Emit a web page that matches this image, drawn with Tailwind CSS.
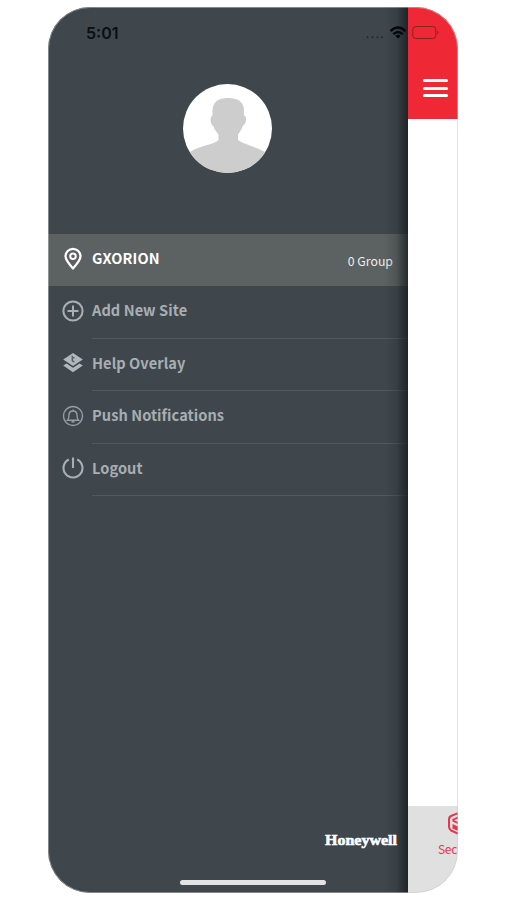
<!DOCTYPE html>
<html lang="en">
<head>
    <meta charset="UTF-8">
    <meta name="viewport" content="width=device-width, initial-scale=1.0">
    <title>Site Menu</title>
    <script src="https://cdn.jsdelivr.net/npm/@tailwindcss/browser@4"></script>
</head>
<body class="bg-white font-['Noto_Sans_CJK_SC',sans-serif] overflow-hidden">
    <div class="relative ml-12 mt-[7px] w-[410px] h-[886px] rounded-[42px] overflow-hidden flex bg-white">
        <!-- Drawer -->
        <aside class="relative w-[360px] h-full shrink-0 bg-[#3f474c] flex flex-col">
            <div class="h-[227px] shrink-0 flex justify-center pt-[77px]">
                <svg class="w-[89px] h-[89px] ml-[-1px]" viewBox="0 0 89 89">
                    <defs>
                        <clipPath id="avatar"><circle cx="44.5" cy="44.5" r="44.5"/></clipPath>
                    </defs>
                    <g clip-path="url(#avatar)">
                        <rect width="89" height="89" fill="#fff"/>
                        <path fill="#cdcdcd" d="M45 14C54 14 61 17.500 61 26V31.500C63.500 32 63.500 37 62 39.500C61 41 60 41.500 59.500 42.500C58.500 46 56 49 55 50.500V56C60 60 71 62 82 68V89H7V68C17 61 31 61 35.500 56V50.500C34 48 31.500 46 30.500 42.500C29 41.500 28.500 41 28 38.500C27 35 28 32 29.500 31.500V26C30 17.500 36 14 45 14Z"/>
                    </g>
                </svg>
            </div>

            <div class="h-[52px] shrink-0 bg-[#5c6161] flex items-center pl-[14px] pr-[15px] text-white">
                <svg class="w-[22px] h-[24px] mr-2 mt-[-2px]" viewBox="0 0 22 24" fill="none" stroke="#fff">
                    <path stroke-width="2.300" stroke-linejoin="round" d="M11 21.500C7 17 3.500 13 3.500 9.300a7.500 7.500 0 0 1 15 0C18.500 13 15 17 11 21.500Z"/>
                    <circle cx="11" cy="9.300" r="2.800" stroke-width="2"/>
                </svg>
                <span class="text-[14.5px] leading-6 font-bold tracking-[0.1px] relative -top-[2px]">GXORION</span>
                <span class="ml-auto text-[12.3px] leading-5 text-[#eeefef] relative top-[1px]">0 Group</span>
            </div>

            <nav class="text-[14.6px] leading-6 font-bold tracking-[0.05px] text-[#a8aeb2]">
                <div class="h-[52.500px] flex items-center pl-[14px]">
                    <svg class="w-[22px] h-[22px] mr-2 mt-[-3px] shrink-0" viewBox="0 0 22 22" fill="none" stroke="#a8b0b5" stroke-width="2">
                        <circle cx="11" cy="11" r="9.600"/>
                        <path d="M11 5.500V16.500M5.500 11H16.500"/>
                    </svg>
                    <div class="h-full grow border-b border-[#525b5c] pt-[12px]">Add New Site</div>
                </div>
                <div class="h-[52.500px] flex items-center pl-[14px]">
                    <svg class="w-[22px] h-[22px] mr-2 mt-[-3px] shrink-0" viewBox="0 0 22 22" fill="#b0b8bd">
                        <path d="M11 1L20.800 7.500L11 14L1.200 7.500Z"/>
                        <path d="M1.200 13.500L4.500 11.500L11 15.800L17.500 11.500L20.800 13.500L11 20.300Z"/>
                        <path d="M10.300 3.800V8.200Q10.300 9.800 12.500 9.500M10.300 5.800H12.500" fill="none" stroke="#596268" stroke-width="1.400"/>
                    </svg>
                    <div class="h-full grow border-b border-[#525b5c] pt-[12px]">Help Overlay</div>
                </div>
                <div class="h-[52.500px] flex items-center pl-[14px]">
                    <svg class="w-[22px] h-[22px] mr-2 mt-[-2px] shrink-0" viewBox="0 0 22 22" fill="none" stroke="#959ea3" stroke-width="1.400">
                        <circle cx="11" cy="11" r="9.500"/>
                        <path d="M5.500 15.200C7 13.700 7 12.500 7 10.300C7 7.500 8.700 6 11 6S15 7.500 15 10.300C15 12.500 15 13.700 16.500 15.200Z"/>
                        <path d="M11 4.500V6M9.500 16.800H12.500"/>
                    </svg>
                    <div class="h-full grow border-b border-[#525b5c] pt-[12px]">Push Notifications</div>
                </div>
                <div class="h-[52.500px] flex items-center pl-[14px]">
                    <svg class="w-[22px] h-[22px] mr-2 mt-[-3px] shrink-0" viewBox="0 0 22 22" fill="none" stroke="#a8b0b5" stroke-width="2.100">
                        <path d="M6.800 2.500A9.500 9.500 0 1 0 15.200 2.500M11 .5V11"/>
                    </svg>
                    <div class="h-full grow border-b border-[#525b5c] pt-[12px]">Logout</div>
                </div>
            </nav>

            <div class="relative z-10 mt-auto mb-[43px] pr-[10px] flex justify-end">
                <svg class="w-[74px] h-[20px]" viewBox="0 0 74 20">
                    <text x="1" y="14.500" textLength="72" lengthAdjust="spacingAndGlyphs" class="font-['Liberation_Serif',serif] font-bold text-[15.5px]" fill="#fff" stroke="#fff" stroke-width=".6">Honeywell</text>
                </svg>
            </div>

            <div class="absolute inset-y-0 right-0 w-6 bg-linear-to-r from-transparent via-[#1f2628]/20 to-[#141a1c]/75"></div>
        </aside>

        <!-- Page behind the drawer -->
        <main class="w-[50px] shrink-0 flex flex-col">
            <div class="h-[112px] w-[50px] shrink-0 bg-[#ee2835] flex flex-col gap-[4.500px] pt-[72px] pl-[15px]">
                <i class="block w-[25px] h-[3px] rounded-full bg-white"></i>
                <i class="block w-[25px] h-[3px] rounded-full bg-white"></i>
                <i class="block w-[25px] h-[3px] rounded-full bg-white"></i>
            </div>
            <div class="mt-auto h-[87px] bg-[#e0e0e0] overflow-hidden text-[#e7364b]">
                <svg class="block mt-[5px] ml-[39px] w-[26px] h-[25px]" viewBox="0 0 26 25" fill="none" stroke="#e7364b">
                    <path stroke-width="2" stroke-linejoin="round" d="M13 1.500L5 4.500Q2 5.500 2 8.500V15.500Q2 18 4 19.500L13 23.500L22 19.500Q24 18 24 15.500V8.500Q24 5.500 21 4.500Z"/>
                    <path stroke-width="1.800" d="M5.500 9L13 5.500M5.500 9.500L13 13"/>
                    <path fill="#e7364b" stroke="none" d="M5.500 13L11 15.500V20L5.500 17.500Z"/>
                </svg>
                <div class="ml-[30px] mt-[4px] text-[12px] leading-[18px] tracking-[-0.3px] whitespace-nowrap">Sec</div>
            </div>
        </main>

        <!-- Status bar -->
        <div class="absolute left-[38px] top-[16px] font-['Inter',sans-serif] font-semibold text-[16px] leading-5 text-[#0b0f11]">5:01</div>
        <svg class="absolute left-[316px] top-[15px] w-[78px] h-[22px]" viewBox="0 0 78 22">
            <g fill="#23292c">
                <circle cx="3.500" cy="15.300" r="1"/>
                <circle cx="8.500" cy="15.300" r="1"/>
                <circle cx="13.500" cy="15.300" r="1"/>
                <circle cx="18" cy="15.300" r="1"/>
            </g>
            <g fill="none" stroke="#050708" stroke-width="2.400">
                <path d="M26.500 9.200Q34 1.800 41.500 9.200"/>
                <path d="M29.300 12.200Q34 7.800 38.700 12.200"/>
            </g>
            <path fill="#050708" d="M31.300 13.800Q34 11.700 36.700 13.800L34 16.600Z"/>
            <rect x="48.800" y="4.500" width="23" height="12" rx="3" fill="none" stroke="#8c1e27"/>
            <path fill="#8c1e27" d="M73.300 8.500Q75.500 10.500 73.300 12.500Z"/>
        </svg>

        <!-- Home indicator -->
        <div class="absolute left-[132px] bottom-[8px] w-[146px] h-[5px] rounded-full bg-[#e3e3e3]"></div>
        <!-- Outline -->
        <div class="absolute inset-0 rounded-[42px] border border-[#c8c8c8]/50"></div>
    </div>
</body>
</html>
